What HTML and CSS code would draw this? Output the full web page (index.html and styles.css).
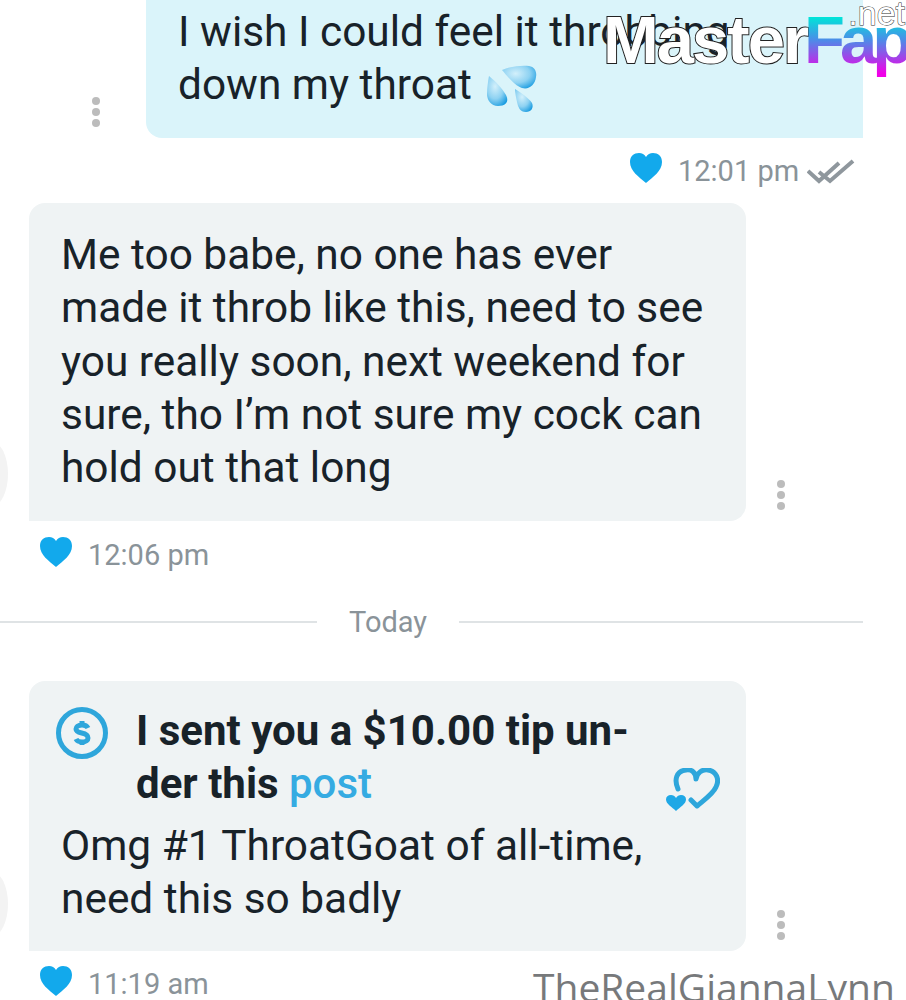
FILE: index.html
```html
<!DOCTYPE html>
<html lang="en">
<head>
  <meta charset="UTF-8" />
  <title>Messages</title>
  <link rel="stylesheet" href="styles.css">
</head>
<body>
  <div class="chat">
    <!-- sent message -->
    <div class="row row-out">
      <div class="dots dots-out"><span></span><span></span><span></span></div>
      <div class="bubble bubble-out">
        <p class="text">I wish I could feel it throbbing<br>down my throat
          <svg class="emoji" viewBox="0 0 50 48" aria-hidden="true">
            <defs>
              <radialGradient id="drop" cx="0.4" cy="0.35" r="0.75">
                <stop offset="0" stop-color="#d3f0fb"/>
                <stop offset="0.55" stop-color="#8ed2f2"/>
                <stop offset="1" stop-color="#159ae0"/>
              </radialGradient>
            </defs>
            <path fill="url(#drop)" d="M15 5C24 1 36 0 42 1 48 2 50 7 49 12 48 20 42 25 35 23 28 21 20 11 15 5z"/>
            <path fill="url(#drop)" d="M2 11C8 16 15 23 19 30 23 38 17 41 11 41 4 41 0 35 0 29 0 23 1 16 2 11z"/>
            <path fill="url(#drop)" d="M28 24C33 27 42 33 45 38 47 43 44 47 39 47 33 47 31 42 30 37 29 32 28 28 28 24z"/>
          </svg>
        </p>
      </div>
    </div>
    <div class="meta meta-out">
      <svg class="heart" viewBox="0 0 32 30" aria-hidden="true"><path d="M16 30C9 24 0 18 0 9 0 3 4 0 9 0c3 0 5.500 1.500 7 4 1.500-2.500 4-4 7-4 5 0 9 3 9 9 0 9-9 15-16 21z"/></svg>
      <span class="time">12:01 pm</span>
      <svg class="checks" viewBox="0 0 48 26" aria-hidden="true"><path d="M1 13l11 10L32 5M12 14l11 9L46 3" fill="none" stroke="#8f979d" stroke-width="4"/></svg>
    </div>

    <!-- reply -->
    <div class="row row-in">
      <div class="bubble bubble-in bubble-reply">
        <p class="text">Me too babe, no one has ever<br>made it throb like this, need to see<br>you really soon, next weekend for<br>sure, tho I’m not sure my cock can<br>hold out that long</p>
      </div>
      <div class="dots"><span></span><span></span><span></span></div>
    </div>
    <div class="meta meta-in meta-reply">
      <svg class="heart" viewBox="0 0 32 30" aria-hidden="true"><path d="M16 30C9 24 0 18 0 9 0 3 4 0 9 0c3 0 5.500 1.500 7 4 1.500-2.500 4-4 7-4 5 0 9 3 9 9 0 9-9 15-16 21z"/></svg>
      <span class="time">12:06 pm</span>
    </div>

    <div class="divider"><span class="divider-line line-left"></span><span class="divider-label">Today</span><span class="divider-line"></span></div>

    <!-- tip message -->
    <div class="row row-in">
      <div class="bubble bubble-in bubble-tip">
        <div class="tip-head">
          <svg class="tip-icon" viewBox="0 0 52 52" aria-hidden="true">
            <circle cx="26" cy="26" r="23.500" fill="none" stroke="#2ea6db" stroke-width="5"/>
            <path d="M32 21C31 19 29 18 26 18 22 18 20 20 20 22 20 28 32 24 32 31 32 33 30 35 26 35 23 35 21 34 20 32M26 14v4M26 34v4" fill="none" stroke="#2ea6db" stroke-width="5"/>
          </svg>
          <p class="text tip-title">I sent you a $10.00 tip un-<br>der this <span class="link">post</span></p>
          <svg class="tip-like" viewBox="0 0 54 44" aria-hidden="true">
            <path d="M12 21C8 12 10 3 20 2 26 1 30 5 30 11 31 5 36 1 42 2 50 3 54 11 50 19 47 26 38 32 31 38L25 32" fill="none" stroke="#2ea6db" stroke-width="5" stroke-linecap="round" stroke-linejoin="round"/>
            <path fill="#1fa8e6" d="M10 43C6 39 0 36 0 31.500 0 28.500 2 27 5 27 7 27 9 28 10 30 11 28 13 27 15 27 18 27 20 28.500 20 31.500 20 36 14 39 10 43z"/>
          </svg>
        </div>
        <p class="text">Omg #1 ThroatGoat of all-time,<br>need this so badly</p>
      </div>
      <div class="dots dots-tip"><span></span><span></span><span></span></div>
    </div>
    <div class="meta meta-in">
      <svg class="heart" viewBox="0 0 32 30" aria-hidden="true"><path d="M16 30C9 24 0 18 0 9 0 3 4 0 9 0c3 0 5.500 1.500 7 4 1.500-2.500 4-4 7-4 5 0 9 3 9 9 0 9-9 15-16 21z"/></svg>
      <span class="time">11:19 am</span>
    </div>

    <!-- avatars peeking in at the left edge -->
    <span class="avatar avatar-one"></span>
    <span class="avatar avatar-two"></span>

    <!-- watermarks -->
    <div class="mark"><span class="mark-white">Master</span><span class="mark-color">Fap</span><span class="mark-net">.net</span></div>
    <div class="handle">TheRealGiannaLynn</div>
  </div>
</body>
</html>
```

FILE: styles.css
```css
:root {
  --out: #daf4fa;
  --in: #eff3f4;
  --ink: #182229;
  --grey: #8a9399;
  --link: #35abe2;
}

* {
  box-sizing: border-box;
  margin: 0;
  padding: 0;
}

body {
  background: #fff;
  font-family: Roboto, sans-serif;
  color: var(--ink);
}

.chat {
  position: relative;
  width: 906px;
  height: 1000px;
  overflow: hidden;
}

.row {
  display: flex;
  align-items: flex-end;
}

.row-out {
  padding-left: 92px;
  gap: 43px;
}

.row-in {
  padding-left: 29px;
  gap: 31px;
}

.bubble {
  width: 717px;
  border-radius: 16px;
}

.bubble-out {
  height: 138px;
  padding: 5px 0 0 32px;
  background: var(--out);
  border-top-left-radius: 0;
  border-top-right-radius: 0;
  border-bottom-right-radius: 0;
}

.bubble-in {
  background: var(--in);
  padding-left: 32px;
  border-bottom-left-radius: 0;
}

.bubble-reply {
  height: 318px;
  padding-top: 25px;
}

.bubble-tip {
  height: 270px;
  padding-top: 23px;
}

.text {
  font-size: 42.4px;
  line-height: 53.25px;
}

.emoji {
  width: 50px;
  height: 48px;
  vertical-align: -14px;
  margin-left: 5px;
}

.dots {
  display: flex;
  flex-direction: column;
  gap: 3px;
  width: 11px;
  margin-bottom: 11px;
}

.dots span {
  width: 8px;
  height: 8px;
  border-radius: 50%;
  background: #bcbcbc;
}

.meta {
  display: flex;
  align-items: center;
  height: 65px;
}

.meta-out {
  padding-left: 630px;
}

.meta-in {
  padding-left: 40px;
}

.meta-reply {
  height: 68px;
}

.heart {
  width: 32px;
  height: 30px;
  fill: #12a9ec;
  margin-top: -6px;
}

.time {
  margin-left: 16px;
  font-size: 29px;
  color: var(--grey);
}

.checks {
  width: 48px;
  height: 26px;
  margin-left: 8px;
}

.divider {
  display: flex;
  align-items: center;
  width: 863px;
  height: 36px;
  margin-top: 15px;
  margin-bottom: 41px;
}

.divider-line {
  flex: 1;
  height: 2px;
  background: #dfe3e5;
}

.line-left {
  flex: 0 0 317px;
}

.divider-label {
  padding: 0 32px;
  font-size: 29px;
  color: var(--grey);
}

.tip-head {
  position: relative;
  display: flex;
  gap: 28px;
  margin-left: -5px;
  margin-bottom: 8px;
}

.tip-icon {
  flex: none;
  width: 52px;
  height: 52px;
  margin-top: 3px;
}

.tip-title {
  font-size: 42px;
  font-weight: 700;
}

.link {
  color: var(--link);
  font-weight: 500;
}

.tip-like {
  position: absolute;
  left: 610px;
  top: 64px;
  width: 54px;
  height: 44px;
}

.avatar {
  position: absolute;
  left: -24px;
  width: 32px;
  height: 64px;
  border-radius: 50%;
  background: #f3f3f3;
}

.avatar-one {
  top: 442px;
}

.avatar-two {
  top: 872px;
}

.mark {
  position: absolute;
  left: 603px;
  top: 0;
  width: 303px;
  font-family: "Liberation Sans", Arial, sans-serif;
  font-weight: 700;
  font-size: 67px;
  line-height: 80px;
  letter-spacing: -2px;
  white-space: nowrap;
  -webkit-text-stroke: 2px #222;
  paint-order: stroke fill;
}

.mark-white {
  color: #fff;
}

.mark-color {
  margin-left: -3px;
  padding-right: 6px;
  letter-spacing: -5px;
  background: linear-gradient(180deg, #00e5d8 20%, #4a8ee8 50%, #9a4ae8 72%, #f000e8 95%);
  -webkit-background-clip: text;
  background-clip: text;
  color: transparent;
  -webkit-text-stroke: 0;
}

.mark-net {
  position: absolute;
  right: 1px;
  top: -7px;
  font-size: 34px;
  line-height: 40px;
  font-weight: 400;
  letter-spacing: 0;
  color: #fff;
  -webkit-text-stroke: 1px #333;
}

.handle {
  position: absolute;
  left: 533px;
  top: 965px;
  font-family: "Open Sans", sans-serif;
  font-size: 39px;
  line-height: 44px;
  color: #77797b;
  white-space: nowrap;
}
```
